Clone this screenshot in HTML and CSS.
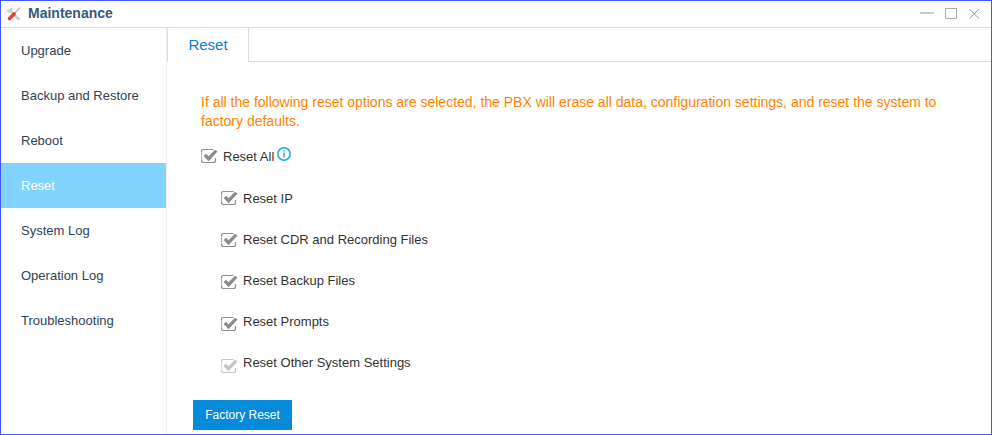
FILE: index.html
```
<!DOCTYPE html>
<html lang="en">
<head>
<meta charset="utf-8">
<title>Maintenance</title>
<link rel="stylesheet" href="styles.css">
</head>
<body>
<svg class="defs" aria-hidden="true">
  <symbol id="check" viewBox="0 0 17 15">
    <path d="M14.5 9V11.5Q14.5 13.5 12.5 13.5H2.5Q.5 13.5 .5 11.5V2.500Q.5.500 2.500.500H12.500" fill="none" stroke="#8f8f8f" stroke-width="1.200"/>
    <path d="M.5 11V3" stroke="#a5b9d3"/>
    <path d="M2.600 7L5 4.700L7.500 7.200L14 .8L16.500 2.600L7.600 12.200Z" fill="#8b8b8b"/>
  </symbol>
</svg>
<div class="window">
  <header class="titlebar">
    <svg class="tools" width="16" height="16" viewBox="0 0 16 16">
      <path d="M4 4.500L12.500 13" stroke="#cfcfcf" stroke-width="2.600" stroke-linecap="round"/>
      <path d="M1.500 3.500Q2 6 4.500 5.800Q6.500 4.500 5 1.800" fill="none" stroke="#d2d2d2" stroke-width="2"/>
      <path d="M8 8L14 1.500" stroke="#b5b5b5" stroke-width="1.300"/>
      <path d="M3.500 12.500L8 8" stroke="#e63a2c" stroke-width="3.600" stroke-linecap="round"/>
      <path d="M3 11.500L7 8" stroke="#f4786b" stroke-width=".8"/>
    </svg>
    <h1>Maintenance</h1>
    <svg class="controls" width="62" height="14" viewBox="0 0 62 14" fill="none">
      <path d="M0 6H14" stroke="#ccc" stroke-width="2"/>
      <path d="M25.500 1.500H36.500V11.500H25.500Z" stroke="#aaa"/>
      <path d="M49.500 2L59 11.500M59 2L49.500 11.500" stroke="#999"/>
    </svg>
  </header>
  <div class="body">
    <nav class="sidebar">
      <a>Upgrade</a>
      <a>Backup and Restore</a>
      <a>Reboot</a>
      <a class="active">Reset</a>
      <a>System Log</a>
      <a>Operation Log</a>
      <a>Troubleshooting</a>
    </nav>
    <main class="content">
      <div class="tabs"><div class="tab">Reset</div><div class="tab-rest"></div></div>
      <p class="warning">If all the following reset options are selected, the PBX will erase all data, configuration settings, and reset the system to factory defaults.</p>
      <div class="option all">
        <svg class="check"><use href="#check"/></svg><span>Reset All</span>
        <svg class="info" width="14" height="14" viewBox="0 0 14 14"><circle cx="7" cy="7" r="6.200" fill="none" stroke="#18a9d6" stroke-width="1.500"/><path d="M7 3V4.500M7 5.500V10.500" stroke="#3aaed2" stroke-width="1.500"/></svg>
      </div>
      <div class="suboptions">
        <div class="option"><svg class="check"><use href="#check"/></svg><span>Reset IP</span></div>
        <div class="option"><svg class="check"><use href="#check"/></svg><span>Reset CDR and Recording Files</span></div>
        <div class="option"><svg class="check"><use href="#check"/></svg><span>Reset Backup Files</span></div>
        <div class="option"><svg class="check"><use href="#check"/></svg><span>Reset Prompts</span></div>
        <div class="option disabled"><svg class="check"><use href="#check"/></svg><span>Reset Other System Settings</span></div>
      </div>
      <button class="submit">Factory Reset</button>
    </main>
  </div>
</div>
</body>
</html>
```
FILE: styles.css
```
* { box-sizing: border-box; }
body { margin: 0; font: 13px/15px "Liberation Sans", Arial, sans-serif; color: #333; background: #fff; }
.defs { display: none; }
.window { height: 435px; border: 1px solid #4359fb; display: flex; flex-direction: column; }
.titlebar { height: 27px; flex: none; border-bottom: 1px solid #ddd; display: flex; align-items: flex-start; padding: 5px 9px 0 5px; }
.titlebar h1 { margin: 0 auto 0 6px; font-size: 14px; line-height: 15px; color: #39597a; }
.controls { margin-top: 1px; }
.body { flex: 1; display: flex; min-height: 0; }
.sidebar { width: 166px; flex: none; border-right: 1px solid #f0f0f0; }
.sidebar a { display: block; height: 45px; line-height: 45px; padding-left: 20px; color: #2e4358; }
.sidebar .active { background: #83d3ff; color: #fff; }
.content { flex: 1; min-width: 0; }
.tabs { height: 34px; display: flex; }
.tab { width: 82px; border: solid #ddd; border-width: 0 1px; text-align: center; font-size: 15px; line-height: 34px; color: #0581cd; }
.tab-rest { flex: 1; border-bottom: 1px solid #ddd; }
.warning { margin: 31px 50px 0 34px; font-size: 14px; line-height: 19px; color: #ff8300; }
.option { display: flex; height: 15px; }
.option span { margin-left: 5px; }
.check { width: 17px; height: 15px; flex: none; }
.all { margin: 18px 0 0 34px; }
.info { margin: -2px 0 0 3px; }
.suboptions { margin: 27px 0 0 54px; display: grid; row-gap: 26px; }
.suboptions .option:nth-child(2) .check { margin-top: 1px; }
.suboptions .option:nth-child(3) .check { margin-top: 2px; }
.suboptions .option:nth-child(4) .check { margin-top: 3px; }
.suboptions .option:nth-child(5) .check { margin-top: 4px; }
.disabled .check { opacity: .5; }
.submit { display: block; width: 99px; height: 30px; margin: 30px 0 0 26px; padding: 0; border: 0; background: #058bdc; color: #fff; font: 12px "Liberation Sans", Arial, sans-serif; }
```
